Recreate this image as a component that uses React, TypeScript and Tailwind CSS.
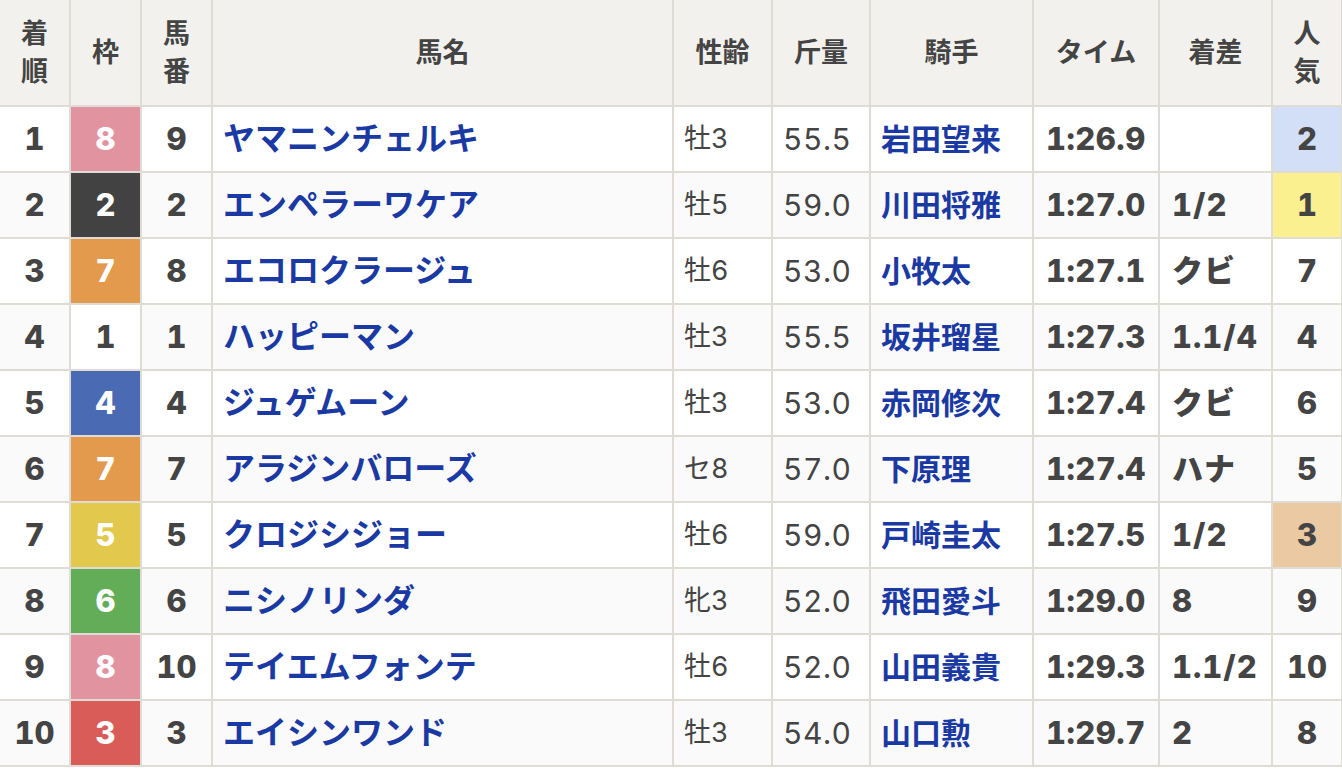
const FONT = "font-['Inter','Noto_Sans_CJK_JP',sans-serif]";

type Row = {
  pos: string;
  waku: number;
  num: string;
  name: string;
  sex: string;
  kg: string;
  jockey: string;
  time: string;
  diff: string;
  pop: string;
};

const rows: Row[] = [
  { pos: '1', waku: 8, num: '9', name: 'ヤマニンチェルキ', sex: '牡3', kg: '55.5', jockey: '岩田望来', time: '1:26.9', diff: '', pop: '2' },
  { pos: '2', waku: 2, num: '2', name: 'エンペラーワケア', sex: '牡5', kg: '59.0', jockey: '川田将雅', time: '1:27.0', diff: '1/2', pop: '1' },
  { pos: '3', waku: 7, num: '8', name: 'エコロクラージュ', sex: '牡6', kg: '53.0', jockey: '小牧太', time: '1:27.1', diff: 'クビ', pop: '7' },
  { pos: '4', waku: 1, num: '1', name: 'ハッピーマン', sex: '牡3', kg: '55.5', jockey: '坂井瑠星', time: '1:27.3', diff: '1.1/4', pop: '4' },
  { pos: '5', waku: 4, num: '4', name: 'ジュゲムーン', sex: '牡3', kg: '53.0', jockey: '赤岡修次', time: '1:27.4', diff: 'クビ', pop: '6' },
  { pos: '6', waku: 7, num: '7', name: 'アラジンバローズ', sex: 'セ8', kg: '57.0', jockey: '下原理', time: '1:27.4', diff: 'ハナ', pop: '5' },
  { pos: '7', waku: 5, num: '5', name: 'クロジシジョー', sex: '牡6', kg: '59.0', jockey: '戸崎圭太', time: '1:27.5', diff: '1/2', pop: '3' },
  { pos: '8', waku: 6, num: '6', name: 'ニシノリンダ', sex: '牝3', kg: '52.0', jockey: '飛田愛斗', time: '1:29.0', diff: '8', pop: '9' },
  { pos: '9', waku: 8, num: '10', name: 'テイエムフォンテ', sex: '牡6', kg: '52.0', jockey: '山田義貴', time: '1:29.3', diff: '1.1/2', pop: '10' },
  { pos: '10', waku: 3, num: '3', name: 'エイシンワンド', sex: '牡3', kg: '54.0', jockey: '山口勲', time: '1:29.7', diff: '2', pop: '8' },
];

const wakuStyle: Record<number, string> = {
  1: 'bg-white text-[#444]',
  2: 'bg-[#424242] text-white',
  3: 'bg-[#da5c59] text-white',
  4: 'bg-[#4a6bb4] text-white',
  5: 'bg-[#e2c84c] text-white',
  6: 'bg-[#63ad59] text-white',
  7: 'bg-[#e39a4d] text-white',
  8: 'bg-[#e1949f] text-white',
};

const popStyle: Record<string, string> = {
  '1': 'bg-[#fbf08f]',
  '2': 'bg-[#d2dff7]',
  '3': 'bg-[#ebc9a2]',
};

const th = 'border-r-2 border-b-2 border-[#dedcd5] text-center align-middle font-bold text-[27px] leading-[38px] text-[#444]';
const td = 'border-r-2 border-b-2 border-[#dedcd5] align-middle h-[66px] p-0';
// heavy, wide digits like the original
const num = 'font-extrabold tabular-nums text-[31px] text-[#444]';

export default function App() {
  return (
    <div className={`w-[1342px] h-[770px] overflow-hidden bg-white ${FONT}`}>
      <table className="w-[1342px] table-fixed border-collapse">
        <colgroup>
          <col className="w-[70px]" />
          <col className="w-[71px]" />
          <col className="w-[71px]" />
          <col className="w-[461px]" />
          <col className="w-[99px]" />
          <col className="w-[98px]" />
          <col className="w-[163px]" />
          <col className="w-[126px]" />
          <col className="w-[113px]" />
          <col className="w-[70px]" />
        </colgroup>
        <thead>
          <tr className="h-[106px] bg-[#f2f1ed]">
            <th className={th}>着<br />順</th>
            <th className={th}>枠</th>
            <th className={th}>馬<br />番</th>
            <th className={th}>馬名</th>
            <th className={th}>性齢</th>
            <th className={th}>斤量</th>
            <th className={th}>騎手</th>
            <th className={th}>タイム</th>
            <th className={th}>着差</th>
            <th className={`${th} border-r-0`}>人<br />気</th>
          </tr>
        </thead>
        <tbody>
          {rows.map((r, i) => (
            <tr key={r.pos} className={i % 2 === 0 ? 'bg-white' : 'bg-[#fafafa]'}>
              <td className={`${td} text-center ${num}`}>{r.pos}</td>
              <td className={`${td} text-center font-extrabold tabular-nums text-[31px] ${wakuStyle[r.waku]}`}>{r.waku}</td>
              <td className={`${td} text-center ${num}`}>{r.num}</td>
              <td className={`${td} pl-[10px] font-bold text-[32px] text-[#1a39a3] whitespace-nowrap`}>{r.name}</td>
              <td className={`${td} pl-[10px] text-[27px] tabular-nums text-[#444]`}>{r.sex}</td>
              <td className={`${td} pl-[10px] text-[30px] tabular-nums tracking-[0.5px] text-[#444]`}>{r.kg}</td>
              <td className={`${td} pl-[10px] font-bold text-[30px] text-[#1a39a3] whitespace-nowrap`}>{r.jockey}</td>
              <td className={`${td} pl-[12px] ${num} tracking-[0.5px]`}>{r.time}</td>
              <td className={`${td} pl-[12px] ${num} tracking-[1px] whitespace-nowrap`}>{r.diff}</td>
              <td className={`${td} border-r-0 text-center ${num} ${popStyle[r.pop] ?? ''}`}>{r.pop}</td>
            </tr>
          ))}
        </tbody>
      </table>
    </div>
  );
}
